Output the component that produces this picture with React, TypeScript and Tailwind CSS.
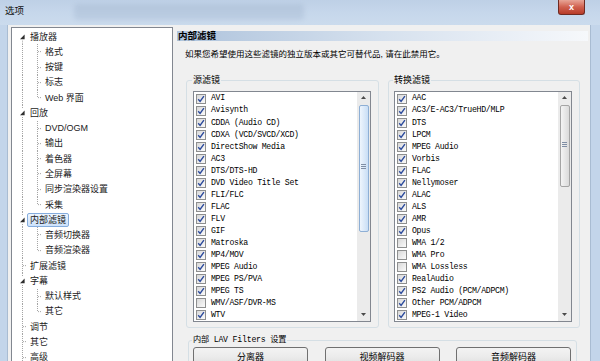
import * as React from 'react';

// --- Types ---
type TreeRow = {
  label: string;
  level: 0 | 1;
  expander?: boolean;
  lastChild?: boolean;
  selected?: boolean;
  first?: boolean;
};

type FilterItem = [string, boolean];

// --- Data ---
const tree: TreeRow[] = [
  { label: '播放器', level: 0, expander: true, first: true },
  { label: '格式', level: 1 },
  { label: '按键', level: 1 },
  { label: '标志', level: 1 },
  { label: 'Web 界面', level: 1, lastChild: true },
  { label: '回放', level: 0, expander: true },
  { label: 'DVD/OGM', level: 1 },
  { label: '输出', level: 1 },
  { label: '着色器', level: 1 },
  { label: '全屏幕', level: 1 },
  { label: '同步渲染器设置', level: 1 },
  { label: '采集', level: 1, lastChild: true },
  { label: '内部滤镜', level: 0, expander: true, selected: true },
  { label: '音频切换器', level: 1 },
  { label: '音频渲染器', level: 1, lastChild: true },
  { label: '扩展滤镜', level: 0 },
  { label: '字幕', level: 0, expander: true },
  { label: '默认样式', level: 1 },
  { label: '其它', level: 1, lastChild: true },
  { label: '调节', level: 0 },
  { label: '其它', level: 0 },
  { label: '高级', level: 0 },
];

const sourceFilters: FilterItem[] = [
  ['AVI', true],
  ['Avisynth', true],
  ['CDDA (Audio CD)', true],
  ['CDXA (VCD/SVCD/XCD)', true],
  ['DirectShow Media', true],
  ['AC3', true],
  ['DTS/DTS-HD', true],
  ['DVD Video Title Set', true],
  ['FLI/FLC', true],
  ['FLAC', true],
  ['FLV', true],
  ['GIF', true],
  ['Matroska', true],
  ['MP4/MOV', true],
  ['MPEG Audio', true],
  ['MPEG PS/PVA', true],
  ['MPEG TS', true],
  ['WMV/ASF/DVR-MS', false],
  ['WTV', true],
];

const transformFilters: FilterItem[] = [
  ['AAC', true],
  ['AC3/E-AC3/TrueHD/MLP', true],
  ['DTS', true],
  ['LPCM', true],
  ['MPEG Audio', true],
  ['Vorbis', true],
  ['FLAC', true],
  ['Nellymoser', true],
  ['ALAC', true],
  ['ALS', true],
  ['AMR', true],
  ['Opus', true],
  ['WMA 1/2', false],
  ['WMA Pro', false],
  ['WMA Lossless', false],
  ['RealAudio', true],
  ['PS2 Audio (PCM/ADPCM)', true],
  ['Other PCM/ADPCM', true],
  ['MPEG-1 Video', true],
];

const ROW_H = 15.27;

export default function App() {
  return (
    <div className="flex h-[361px] w-[600px] flex-col overflow-hidden bg-[#c3d5ea] font-['Liberation_Sans','Noto_Sans_CJK_SC',sans-serif] text-[9px] text-black">
      {/* Title bar */}
      <div className="flex h-[25px] shrink-0 items-start bg-gradient-to-b from-[#bed0e6] via-[#c6d7eb] to-[#cbdbed]">
        <span className="ml-[5px] mt-[5px] text-[9.5px] leading-[12px] text-[#111]">选项</span>
        <div className="mx-[50px] mt-[4px] h-[16px] w-[230px] rounded-[4px] bg-gradient-to-b from-[#b3c6dc] to-[#bccee3] blur-[2px]" />
        <div className="flex-1" />
        <button className="mr-[15px] flex h-[15px] w-[27px] items-center justify-center rounded-b-[3px] border border-t-0 border-[#6e2a22] bg-gradient-to-b from-[#e7a497] via-[#d0604f] to-[#b73b28] text-[9px] font-bold leading-none text-white">
          x
        </button>
      </div>

      <div className="flex min-h-0 flex-1">
        <div className="w-[8px] shrink-0 border-r border-[#a9bcd2]" />

        {/* Client area */}
        <div className="flex min-w-0 flex-1 bg-[#f0f0f0]">
          {/* Tree */}
          <div className="ml-[3px] mt-[2px] w-[162px] shrink-0 border border-b-0 border-[#828790] bg-white pt-[1px] text-[#1b1b1b]">
            {tree.map((row, i) => (
              <div key={i} className="flex h-[15.27px] items-center">
                <TreeGutter row={row} />
                {row.selected ? (
                  <span className="rounded-[2px] border border-[#84acdd] bg-gradient-to-b from-[#edf5fe] to-[#cde2fb] px-[2px] leading-[12px]">
                    {row.label}
                  </span>
                ) : (
                  <span className="px-[3px] leading-[12px]">{row.label}</span>
                )}
              </div>
            ))}
          </div>

          {/* Page */}
          <div className="ml-[4px] mr-[2px] flex min-w-0 flex-1 flex-col pt-[6px]">
            <div className="flex h-[13px] items-center bg-gradient-to-r from-[#aec3dc] via-[#d6e1ee] to-[#f6f8fb] pl-[1px] text-[9.5px] font-bold leading-none">
              内部滤镜
            </div>
            <p className="mt-[7px] pl-[8px] text-[8.5px] leading-[12px]">
              如果您希望使用这些滤镜的独立版本或其它可替代品, 请在此禁用它。
            </p>

            <div className="mt-[20px] flex">
              <div className="ml-[9px] h-[248px] w-[193px] rounded-[3px] border border-[#d5dfe5] pb-[5px]">
                <div className="-mt-[7px] ml-[5px] w-fit bg-[#f0f0f0] px-[1px] leading-[12px]">源滤镜</div>
                <FilterList
                  items={sourceFilters}
                  boxClass="ml-[6px] mr-[7px] mt-[5px]"
                  thumbClass="h-[127px] border-[#8eafd5] from-[#eef5fd] to-[#c9def5]"
                  gripClass="mt-[58px]"
                />
              </div>
              <div className="ml-[9px] h-[248px] w-[192px] rounded-[3px] border border-[#d5dfe5] pb-[5px]">
                <div className="-mt-[7px] ml-[4px] w-fit bg-[#f0f0f0] px-[1px] leading-[12px]">转换滤镜</div>
                <FilterList
                  items={transformFilters}
                  boxClass="ml-[5px] mr-[7px] mt-[5px]"
                  thumbClass="h-[82px] border-[#a4a4a4] from-[#f4f4f4] to-[#dadada]"
                  gripClass="mt-[36px]"
                />
              </div>
            </div>

            <div className="ml-[11px] mr-[11px] mt-[12px] h-[40px] rounded-[3px] border border-[#d5dfe5]">
              <div className="-mt-[7px] ml-[3px] w-fit bg-[#f0f0f0] px-[1px] font-['Liberation_Mono','Noto_Sans_CJK_SC',monospace] text-[8.2px] leading-[12px] tracking-[-0.2px]">
                内部 LAV Filters 设置
              </div>
              <div className="mt-[1px] flex justify-between pl-[4px] pr-[5px]">
                <WinButton label="分离器" />
                <WinButton label="视频解码器" />
                <WinButton label="音频解码器" />
              </div>
            </div>
          </div>
        </div>

        <div className="w-[10px] shrink-0 border-l border-[#a9bcd2]" />
      </div>
    </div>
  );
}

/* ---------------- Tree connector lines ---------------- */

function TreeGutter({ row }: { row: TreeRow }) {
  const h = ROW_H;
  const mid = h / 2;
  const w = row.level === 0 ? 15 : 30;
  const line = { stroke: '#a3a3a3', strokeWidth: 1, strokeDasharray: '1 1' };
  return (
    <svg width={w} height={h} viewBox={`0 0 ${w} ${h}`} className="shrink-0">
      <line x1={10.5} x2={10.5} y1={row.first ? mid : 0} y2={h} {...line} />
      {row.level === 0 && <line x1={11} x2={15} y1={mid} y2={mid} {...line} />}
      {row.level === 1 && (
        <>
          <line x1={25.5} x2={25.5} y1={0} y2={row.lastChild ? mid : h} {...line} />
          <line x1={26} x2={30} y1={mid} y2={mid} {...line} />
        </>
      )}
      {row.expander && (
        <>
          <rect x={7} y={4} width={7} height={7} fill="#fff" />
          <polygon points="8,10.2 12.6,10.2 12.6,5.6" fill="#2e2e2e" />
        </>
      )}
    </svg>
  );
}

/* ---------------- Check list with scrollbar ---------------- */

function FilterList({
  items,
  boxClass,
  thumbClass,
  gripClass,
}: {
  items: FilterItem[];
  boxClass: string;
  thumbClass: string;
  gripClass: string;
}) {
  return (
    <div className={`${boxClass} flex h-[231px] border border-[#828790] bg-white`}>
      <div className="min-w-0 flex-1 overflow-hidden pl-[2px] pt-[1px] font-['Liberation_Mono','Noto_Sans_CJK_SC',monospace] text-[8.2px] tracking-[-0.3px]">
        {items.map(([name, on], i) => (
          <div key={i} className="flex h-[12.06px] items-center gap-[5px] whitespace-nowrap">
            <CheckBox on={on} />
            <span className="leading-none">{name}</span>
          </div>
        ))}
      </div>
      <div className="flex w-[13px] shrink-0 flex-col bg-[#ebebeb]">
        <div className="flex h-[12px] items-center justify-center">
          <svg width="5" height="3" viewBox="0 0 5 3">
            <polygon points="0,3 5,3 2.5,0" fill="#4a4a4a" />
          </svg>
        </div>
        <div className="min-h-0 flex-1">
          <div className={`${thumbClass} mx-[1.5px] mt-[1px] rounded-[2px] border bg-gradient-to-r`}>
            <div className={`${gripClass} mx-auto flex w-[5px] flex-col gap-[1px]`}>
              <div className="h-px bg-[#7f8ea5]" />
              <div className="h-px bg-[#7f8ea5]" />
              <div className="h-px bg-[#7f8ea5]" />
            </div>
          </div>
        </div>
        <div className="flex h-[12px] items-center justify-center">
          <svg width="5" height="3" viewBox="0 0 5 3">
            <polygon points="0,0 5,0 2.5,3" fill="#4a4a4a" />
          </svg>
        </div>
      </div>
    </div>
  );
}

function CheckBox({ on }: { on: boolean }) {
  return (
    <span className="flex h-[10px] w-[10px] shrink-0 items-center justify-center border border-[#8e8f8f] bg-gradient-to-br from-[#d8d8d8] to-[#fbfbfb]">
      {on && (
        <svg width="8" height="8" viewBox="0 0 8 8">
          <path d="M1.2 4.3 L3.1 6.4 L6.9 1.2" fill="none" stroke="#2b4a9c" strokeWidth="1.4" />
        </svg>
      )}
    </span>
  );
}

function WinButton({ label }: { label: string }) {
  return (
    <button className="h-[20px] w-[115px] rounded-[3px] border border-[#707070] bg-gradient-to-b from-[#f3f3f3] via-[#ebebeb] to-[#dddddd] pt-[1px] leading-[12px] text-[9px]">
      <span className="block">{label}</span>
    </button>
  );
}
